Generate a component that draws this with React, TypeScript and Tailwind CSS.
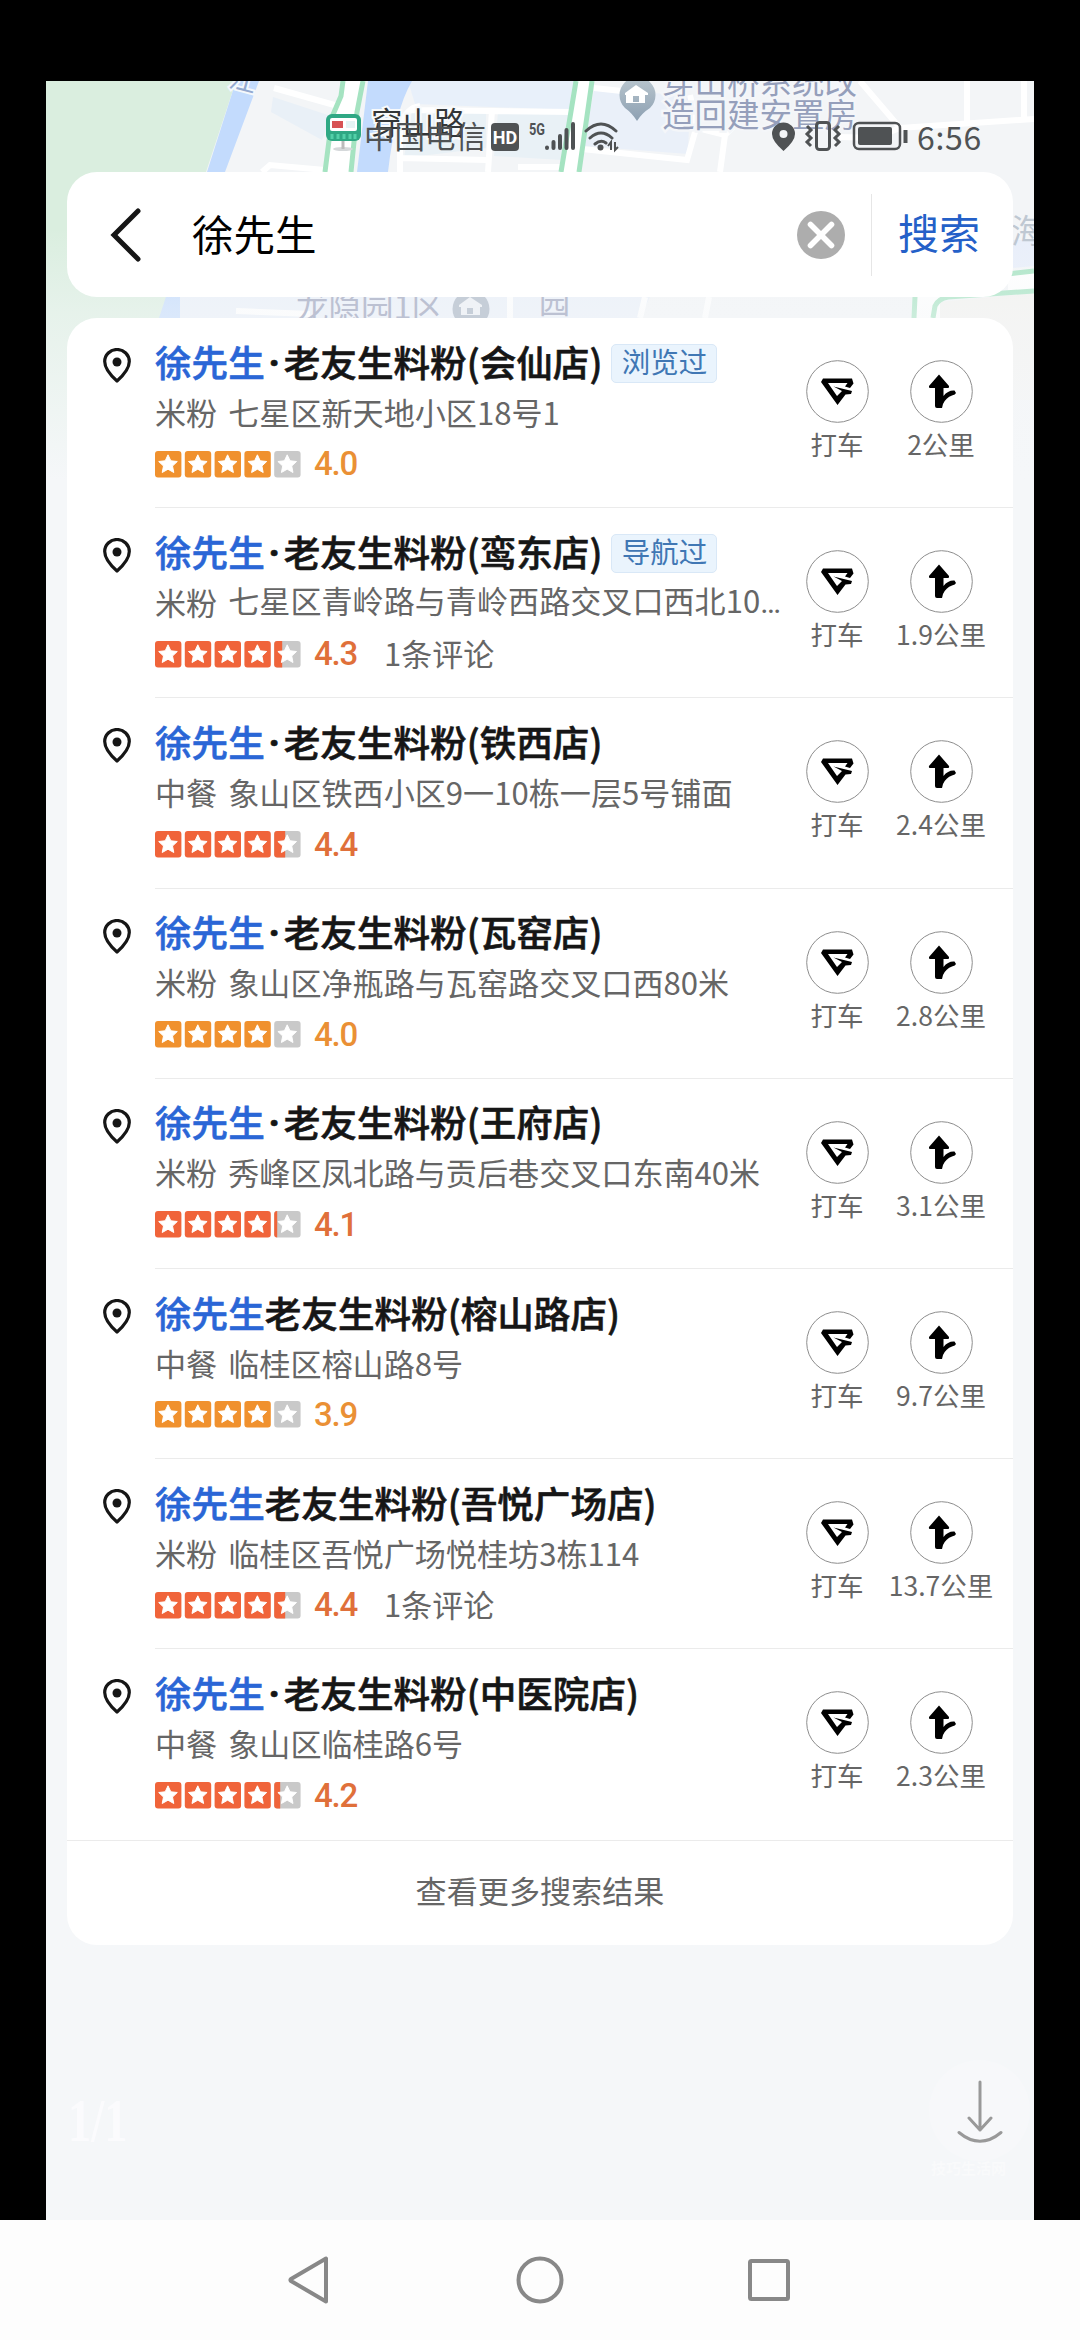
import { X } from "lucide-react";

const shops = [
  { dot: true, rest: "老友生料粉(会仙店)", tag: "浏览过", kind: "米粉", address: "七星区新天地小区18号1", cut: false, score: "4.0", fill: 0, reviews: "", distance: "2公里" },
  { dot: true, rest: "老友生料粉(鸾东店)", tag: "导航过", kind: "米粉", address: "七星区青岭路与青岭西路交叉口西北10", cut: true, score: "4.3", fill: 8, reviews: "1条评论", distance: "1.9公里" },
  { dot: true, rest: "老友生料粉(铁西店)", tag: "", kind: "中餐", address: "象山区铁西小区9一10栋一层5号铺面", cut: false, score: "4.4", fill: 11, reviews: "", distance: "2.4公里" },
  { dot: true, rest: "老友生料粉(瓦窑店)", tag: "", kind: "米粉", address: "象山区净瓶路与瓦窑路交叉口西80米", cut: false, score: "4.0", fill: 0, reviews: "", distance: "2.8公里" },
  { dot: true, rest: "老友生料粉(王府店)", tag: "", kind: "米粉", address: "秀峰区凤北路与贡后巷交叉口东南40米", cut: false, score: "4.1", fill: 3, reviews: "", distance: "3.1公里" },
  { dot: false, rest: "老友生料粉(榕山路店)", tag: "", kind: "中餐", address: "临桂区榕山路8号", cut: false, score: "3.9", fill: 0, reviews: "", distance: "9.7公里" },
  { dot: false, rest: "老友生料粉(吾悦广场店)", tag: "", kind: "米粉", address: "临桂区吾悦广场悦桂坊3栋114", cut: false, score: "4.4", fill: 11, reviews: "1条评论", distance: "13.7公里" },
  { dot: true, rest: "老友生料粉(中医院店)", tag: "", kind: "中餐", address: "象山区临桂路6号", cut: false, score: "4.2", fill: 6, reviews: "", distance: "2.3公里" },
];

function MapBackdrop() {
  return (
    <svg className="absolute left-0 top-0" width="988" height="420" viewBox="46 81 988 420">
      <defs>
        <linearGradient id="fade" x1="0" y1="0" x2="0" y2="1">
          <stop offset="0.35" stopColor="#f5f7f9" stopOpacity="0" />
          <stop offset="0.55" stopColor="#f5f7f9" stopOpacity="0.45" />
          <stop offset="0.95" stopColor="#f5f7f9" stopOpacity="1" />
        </linearGradient>
        <linearGradient id="poi" x1="0" y1="0" x2="0" y2="1">
          <stop offset="0" stopColor="#b9c6ce" />
          <stop offset="1" stopColor="#8da0b2" />
        </linearGradient>
      </defs>
      <rect x="46" y="81" width="988" height="420" fill="#f3f5f7" />
      <path d="M46 81H236L206 172L160 318L120 500H46Z" fill="#daeedf" />
      <path d="M236 81H259L225 172L180 318H159L207 172Z" fill="#c3dbfd" />
      <path d="M273 97L331 116L322 140L271 112Z" fill="#e9f0f7" />
      <path d="M408 81H576L572 110L415 104Z" fill="#e8f0fa" />
      <path d="M412 112H486V148L404 158Z M498 112H570L562 160L494 156Z" fill="#e9f1f6" />
      <path d="M594 90L690 95L688 154L584 146Z M180 297H1034V318H180Z" fill="#eaf0f9" />
      <path d="M650 297H1034V318H640Z" fill="#f3f5f7" />
      <g fill="none" stroke="#fff" strokeWidth="6">
        <path d="M274 88L338 106M262 172L270 165L325 170M411 110L574 112M492 110L488 172M400 158L487 160M400 172V128Q405 108 420 106M518 167H562" />
        <path d="M594 88L640 93M582 149L687 160L697 125M690 95L697 128L725 135L750 110M725 135L720 172M860 81L900 128L1034 119M900 128L874 138L840 137M967 81V125M1024 81V119" />
        <path d="M236 311L310 314M640 318L645 297M705 318L709 297M510 297V318" />
      </g>
      <path d="M368 81H412Q395 110 388 172H357Z" fill="#c3dbfd" />
      <path d="M344 81L341 96L333 117L325 172H352L357 116L363 81Z" fill="#fff" />
      <path d="M577 81L562 172H580L593 81Z" fill="#fff" />
      <path d="M935 318L938 302L1034 293V400H935Z" fill="#f3f2ef" />
      <path d="M1008 276L1034 273V290L1008 294Z" fill="#fff" />
      <path d="M914 297H940V318H912Z" fill="#fff" />
      <g fill="none" stroke="#a5e3c1" strokeWidth="5">
        <path d="M343 81L341 96L332 117L325 172M363 81L357 112L351 172" />
        <path d="M576 81L561 172M592 81L579 172" />
        <path d="M1008 274L1034 271M914 318L915 297M933 318L935 306Q938 299 948 297L1034 291" />
      </g>
      <path d="M1013 240H1034V266L1013 268Z" fill="#e8eefa" />
      <rect x="46" y="81" width="988" height="420" fill="url(#fade)" />
      <g fontFamily="'Noto Sans CJK SC', sans-serif" fill="#959fbb" fontSize="32.5">
        <text x="230" y="90" fontSize="27" fill="#93a9d0" stroke="#f4f8fc" strokeWidth="4" paintOrder="stroke" transform="rotate(15 243 80)">江</text>
        <text x="662" y="93.500" stroke="#f4f6f9" strokeWidth="5" paintOrder="stroke">穿山桥系统改</text>
        <text x="662" y="126.500" stroke="#f4f6f9" strokeWidth="5" paintOrder="stroke">造回建安置房</text>
        <text x="296" y="319" fill="#bcc1d2">龙隐园1区</text>
        <text x="539" y="313" fill="#bcc1d2" fontSize="31">园</text>
        <text x="1011" y="243" fill="#bfc8d2">海</text>
      </g>
      <path d="M637 121Q632 113 625 108A18 18 0 1 1 650 108Q642 113 637 121Z" fill="url(#poi)" />
      <path d="M625 93L636 85L648 93V95H645V103H626V95H625Z M633 96V102H639V96Z" fill="#fff" fillRule="evenodd" />
      <circle cx="471" cy="309" r="18.500" fill="#c6ced8" />
      <path d="M459 305L470 297L482 305V307H480V315H461V307H459Z M467 308V314H473V308Z" fill="#eff2f6" fillRule="evenodd" />
      <ellipse cx="343" cy="149" rx="10" ry="2" fill="#d5d8da" />
      <path d="M343 140V149" stroke="#bbb" strokeWidth="3" />
      <rect x="326" y="114" width="35" height="27" rx="6" fill="#2fa884" />
      <rect x="330" y="118" width="27" height="13" rx="2" fill="#fff" />
      <rect x="332" y="121" width="11" height="7" fill="#d75254" />
      <rect x="346" y="121" width="9" height="7" fill="#e4f3f4" />
      <path d="M332 134V139M338 134V139M344 134V139M350 134V139M355 134V139" stroke="#53d0a8" strokeWidth="3" />
      <text x="371" y="134.500" fontSize="31.500" fill="#333638" stroke="#f8fafc" strokeWidth="4" paintOrder="stroke" fontFamily="'Noto Sans CJK SC', sans-serif">穿山路</text>
    </svg>
  );
}

function StatusBar() {
  return (
    <div className="relative flex h-[91px] items-center justify-between pl-[318px] pr-[51px] pt-[21px] text-[#4f5254]">
      <div className="flex h-8 items-center">
        <span className="mb-1 w-[122px] whitespace-nowrap text-[30.500px] leading-8">中国电信</span>
        <span className="ml-[5px] flex h-7 w-7 items-center justify-center rounded-[4px] bg-[#4f5254] font-[Roboto] text-[18px] font-bold text-white">HD</span>
        <svg className="ml-2" width="96" height="32" viewBox="526 121 96 32">
          <text x="528" y="135" fontSize="16" fontWeight="700" fill="#4f5254" textLength="16" lengthAdjust="spacingAndGlyphs" fontFamily="Roboto">5G</text>
          <g stroke="#4f5254" strokeWidth="4" strokeLinecap="round" fill="none">
            <path d="M546 147.500V148M552.500 142V148M559 136V148M565.500 130V148M572 124V148" />
            <path d="M585 131Q600 117 615 131M589 138Q600 128 611 138M594 144Q600 139 605 143" strokeWidth="3" />
          </g>
          <circle cx="599.500" cy="147.500" r="3" fill="#4f5254" />
          <path d="M607 146L610 142V150M614 142V150L617 147" stroke="#4f5254" strokeWidth="2" fill="none" />
        </svg>
      </div>
      <div className="flex h-8 items-center">
        <svg width="140" height="32" viewBox="770 121 140 32" fill="none" stroke="#4f5254">
          <path d="M782.500 151Q771 141 771 134A11.500 11.500 0 0 1 794 134Q794 141 782.500 151ZM782.500 130A4 4 0 1 0 782.500 138A4 4 0 1 0 782.500 130Z" fill="#4f5254" fillRule="evenodd" stroke="none" />
          <rect x="815.500" y="122.500" width="13" height="27" rx="3" strokeWidth="3" />
          <path d="M806 126L810 130L806 134L810 138L806 142L810 146M838 126L834 130L838 134L834 138L838 142L834 146" strokeWidth="3" />
          <rect x="853" y="123" width="46" height="26" rx="5" strokeWidth="2.500" />
          <rect x="857" y="127" width="34" height="18" rx="2" fill="#4f5254" stroke="none" />
          <path d="M904.500 130V143" strokeWidth="4" />
        </svg>
        <span className="mb-[3px] ml-[6px] w-[66px] whitespace-nowrap text-[32px] leading-8 tracking-[0.700px]">6:56</span>
      </div>
    </div>
  );
}

function SearchBar() {
  return (
    <div className="relative ml-[21px] flex h-[125px] w-[946px] items-center rounded-[30px] bg-white">
      <svg className="ml-[42px]" width="34" height="56" viewBox="0 0 34 56">
        <path d="M28 4L4 28L28 52" transform="translate(1 0)" fill="none" stroke="#161616" strokeWidth="5" strokeLinecap="round" />
      </svg>
      <span className="mb-1 ml-[49px] flex-1 text-[41.500px] leading-[60px] text-black">徐先生</span>
      <span className="flex h-12 w-12 items-center justify-center rounded-full bg-[#adadad]">
        <X size={42} strokeWidth={3.2} color="#fff" />
      </span>
      <span className="ml-[26px] h-[82px] w-px bg-[#e6e6e6]" />
      <span className="mb-[7px] ml-[26px] w-[115px] text-[41px] leading-[60px] text-[#2460c8]">搜索</span>
    </div>
  );
}

function Stars({ score, fill }: { score: string; fill: number }) {
  const color = Number(score) > 4 ? "#f0643a" : "#f0912e";
  const star = "M13 3.800L15.800 9.800L22.300 10.500L17.500 15L18.800 21.500L13 18.200L7.200 21.500L8.500 15L3.700 10.500L10.200 9.800Z";

  return (
    <svg width="147" height="27" viewBox="0 0 147 27">
      {[0, 1, 2, 3, 4].map((i) => (
        <g key={i} transform={`translate(${i * 29.8} 0)`}>
          <rect width="26.400" height="26.400" rx="3" fill={i < 4 ? color : "#c9c9c9"} />
          {i === 4 && fill > 0 && <path d={`M${fill} 0H3Q0 0 0 3V23.400Q0 26.400 3 26.400H${fill}Z`} fill={color} />}
          <path d={star} fill="#fff" stroke="#fff" strokeLinejoin="round" />
        </g>
      ))}
    </svg>
  );
}

function Action({ label, children }: { label: string; children: React.ReactNode }) {
  return (
    <div className="flex w-[104px] flex-col items-center">
      <svg width="63" height="63" viewBox="0 0 63 63">
        <circle cx="31.500" cy="31.500" r="30.800" fill="#fff" stroke="#8d8d8d" />
        {children}
      </svg>
      <span className="mt-[3px] whitespace-nowrap text-[26.500px] leading-9 text-[#666]">{label}</span>
    </div>
  );
}

function ShopRow({ shop }: { shop: (typeof shops)[number] }) {
  return (
    <div className="group flex h-[190.200px]">
      <svg className="ml-9 mt-[30px] shrink-0" width="28" height="36" viewBox="0 0 28 36">
        <path d="M14 33Q1.700 22 1.700 13.500A12.300 12 0 0 1 26.300 13.500Q26.300 22 14 33Z" fill="none" stroke="#161616" strokeWidth="3.200" strokeLinejoin="round" />
        <circle cx="14" cy="14" r="4.500" fill="#161616" />
      </svg>
      <div className="ml-6 flex flex-1 border-b-[1.500px] border-[#ebebeb] group-nth-[8]:border-b-0">
        <div className="flex w-[630px] flex-col pt-[19px]">
          <div className="flex h-[50px] items-center whitespace-nowrap text-[36.600px] font-medium text-[#161616] [-webkit-text-stroke:0.600px]">
            <span className="text-[#2a66d6]">徐先生</span>
            {shop.dot && <span className="w-[19px] text-center font-['Noto_Sans'] font-bold">·</span>}
            <span>{shop.rest}</span>
            {shop.tag && (
              <span className="ml-[9px] mt-[2px] flex h-[39px] w-[106px] items-center justify-center rounded-[5px] border border-[#d9e8f7] bg-[#eaf4fd] pb-[3px] text-[28.500px] font-normal text-[#4077b4] [-webkit-text-stroke:0]">{shop.tag}</span>
            )}
          </div>
          <div className="flex h-[50px] items-center gap-[11px] whitespace-nowrap text-[31.100px] text-[#666]">
            <span>{shop.kind}</span>
            <span>
              {shop.address}
              {shop.cut && <span className="font-[Roboto]">…</span>}
            </span>
          </div>
          <div className="flex h-[54px] items-center">
            <Stars score={shop.score} fill={shop.fill} />
            <span className={`ml-3 w-[70px] font-[Roboto] text-[33px] font-medium tracking-[-1.200px] ${Number(shop.score) > 4 ? "text-[#e0703a]" : "text-[#ea9035]"}`}>{shop.score}</span>
            <span className="mb-[2px] text-[31px] text-[#666]">{shop.reviews}</span>
          </div>
        </div>
        <div className="flex pt-[42px]">
          <Action label="打车">
            <path d="M17 18.500H46L47.500 23.500L44 28L39 26.500L41.500 23H22L31 36L36 31L27.500 26.500L46 31L45 34L39.500 34.500L31.500 45L15 22Z" fill="#000" />
          </Action>
          <Action label={shop.distance}>
            <path d="M29 14.500L39 26Q39.500 28 38 28H33.500V36Q38 30 44.500 30.500L46 33Q45.500 34.500 42 35.500Q36 37.500 33 44L32 48H27Q25 48 25 46V28H20Q18.500 28 19 26Z" fill="#000" />
          </Action>
        </div>
      </div>
    </div>
  );
}

function NavBar() {
  return (
    <div className="flex h-[120px] items-center bg-[#fdfdfd] pl-[285px]">
      <svg width="510" height="52" viewBox="285 2254 510 52" fill="none" stroke="#888" strokeWidth="4" strokeLinejoin="round">
        <path d="M326 2258.500V2301.500L291 2281Q290 2280 291 2279Z" />
        <circle cx="540" cy="2280" r="21.500" />
        <rect x="750" y="2261" width="38" height="38" rx="1.500" />
      </svg>
    </div>
  );
}

export default function App() {
  return (
    <div className="h-[2340px] w-[1080px] overflow-hidden bg-black font-['Noto_Sans_CJK_SC',sans-serif]">
      <div className="h-[81px]" />
      <div className="relative ml-[46px] h-[2139px] w-[988px] overflow-hidden bg-[#f5f7f9]">
        <MapBackdrop />
        <StatusBar />
        <SearchBar />
        <div className="relative ml-[21px] mt-[21px] h-[1627px] w-[946px] overflow-hidden rounded-[30px] bg-white">
          {shops.map((shop) => (
            <ShopRow key={shop.distance} shop={shop} />
          ))}
          <div className="flex h-[105px] items-center justify-center border-t-[1.500px] border-[#ebebeb] pb-1 text-[31.100px] text-[#666]">查看更多搜索结果</div>
        </div>
        <span className="absolute left-[22px] top-[2006px] origin-left scale-x-75 font-['Liberation_Serif',serif] text-[62px] font-bold leading-[66px] text-[#fbfbfd]">1/1</span>
        {/* save button floating over the page */}
        <div className="absolute left-[883px] top-[1979px] flex h-[101px] w-[101px] items-center justify-center rounded-full bg-[#f7f8fa]">
          <svg width="50" height="64" viewBox="0 0 50 64" fill="none" stroke="#999" strokeWidth="3" strokeLinecap="round" strokeLinejoin="round">
            <path d="M25 3V51M14 39L25 51L36 39M4 53.500Q25 71 46 53.500" />
          </svg>
        </div>
        <span className="absolute left-[885px] top-[2077px] text-[15px] font-bold leading-5 text-[#f9fafb]">技巧生活网</span>
      </div>
      <NavBar />
    </div>
  );
}
